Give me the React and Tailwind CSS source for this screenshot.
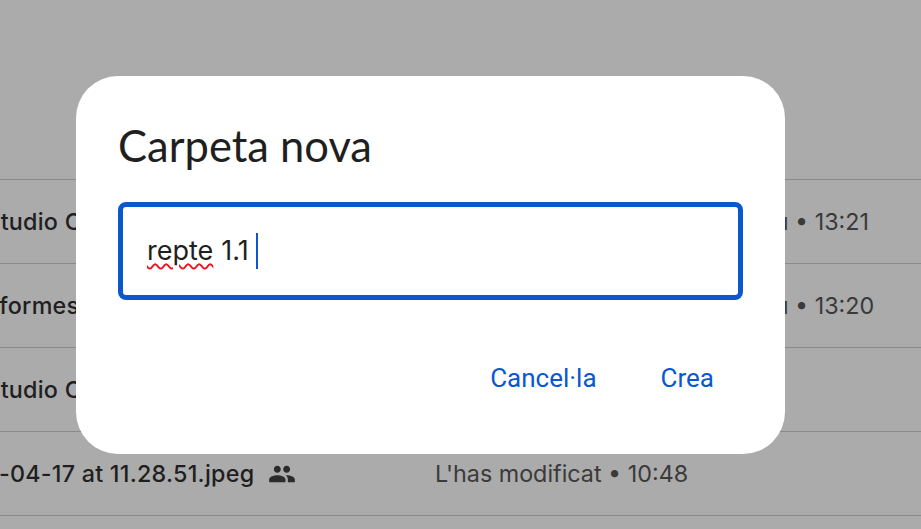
import React from "react";

const rows = [
  { name: "Google AI Studio Code", meta: "L'has modificat tu • 13:21", nameClass: "-ml-[132px]", metaClass: "ml-[159px]" },
  { name: "Proves de formes del curs", meta: "L'has modificat tu • 13:20", nameClass: "-ml-[120px]", metaClass: "ml-[159px]" },
  { name: "Google AI Studio Code", meta: "", nameClass: "-ml-[132px]", metaClass: "" },
  { name: "WhatsApp Image 2025-04-17 at 11.28.51.jpeg", meta: "L'has modificat • 10:48", nameClass: "-ml-[261px]", metaClass: "", shared: true },
];

function SharedIcon() {
  return (
    <svg viewBox="0 0 24 24" className="w-[28px] h-[28px] shrink-0 fill-[#2b2b2b]">
      <path d="M16 11c1.66 0 2.99-1.34 2.99-3S17.66 5 16 5s-3 1.34-3 3 1.34 3 3 3zm-8 0c1.66 0 2.99-1.34 2.99-3S9.66 5 8 5 5 6.34 5 8s1.34 3 3 3zm0 2c-2.33 0-7 1.17-7 3.5V19h14v-2.5C15 14.17 10.33 13 8 13zm8 0c-.29 0-.62.02-.97.05 1.16.84 1.97 1.97 1.97 3.45V19h6v-2.5c0-2.33-4.67-3.5-7-3.5z" />
    </svg>
  );
}

function Row({ row }) {
  return (
    <div className="h-[84px] border-t border-[#8a8a8a] flex items-center overflow-hidden text-[23.3px] leading-7 text-[#1f1f1f] font-['Inter',sans-serif]">
      <div className="w-[435px] shrink-0">
        <div className={`flex items-center gap-[14px] whitespace-nowrap font-[450] tracking-[0.25px] ${row.nameClass}`}>
          <span>{row.name}</span>
          {row.shared && <SharedIcon />}
        </div>
      </div>
      <div className={`whitespace-nowrap text-[#3a3a3a] font-normal ${row.metaClass}`}>{row.meta}</div>
    </div>
  );
}

export default function App() {
  return (
    <div className="relative w-[921px] h-[529px] overflow-hidden bg-[#ababab]">
      <div className="pt-[179px]">
        {rows.map((r, i) => (
          <Row key={i} row={r} />
        ))}
        <div className="border-t border-[#8a8a8a]" />
      </div>
      <div className="absolute left-[76px] top-[76px] w-[709px] h-[378px] rounded-[42px] bg-white pt-[43px] px-[42px]">
        <h1 className="text-[43.5px] leading-[52px] text-[#1f1f1f] font-['Lato',sans-serif]">Carpeta nova</h1>
        <div className="mt-[31px] h-[98px] w-[625px] border-[5px] border-[#0b57d0] rounded-[8px] flex items-center pl-[24px] text-[27px] text-[#1f1f1f] font-['Inter',sans-serif]">
          <span className="underline decoration-wavy decoration-[#f01020] decoration-[1.5px] underline-offset-[3px]">repte</span>
          <span className="ml-[8px]">1.1</span>
          <span className="ml-[7px] w-[2px] h-[36px] bg-[#0b57d0]" />
        </div>
        <div className="mt-[62px] flex justify-end gap-[64px] pr-[29px] text-[26px] leading-[32px] text-[#0b57d0] font-['Roboto',sans-serif] font-normal">
          <button>Cancel·la</button>
          <button>Crea</button>
        </div>
      </div>
    </div>
  );
}
